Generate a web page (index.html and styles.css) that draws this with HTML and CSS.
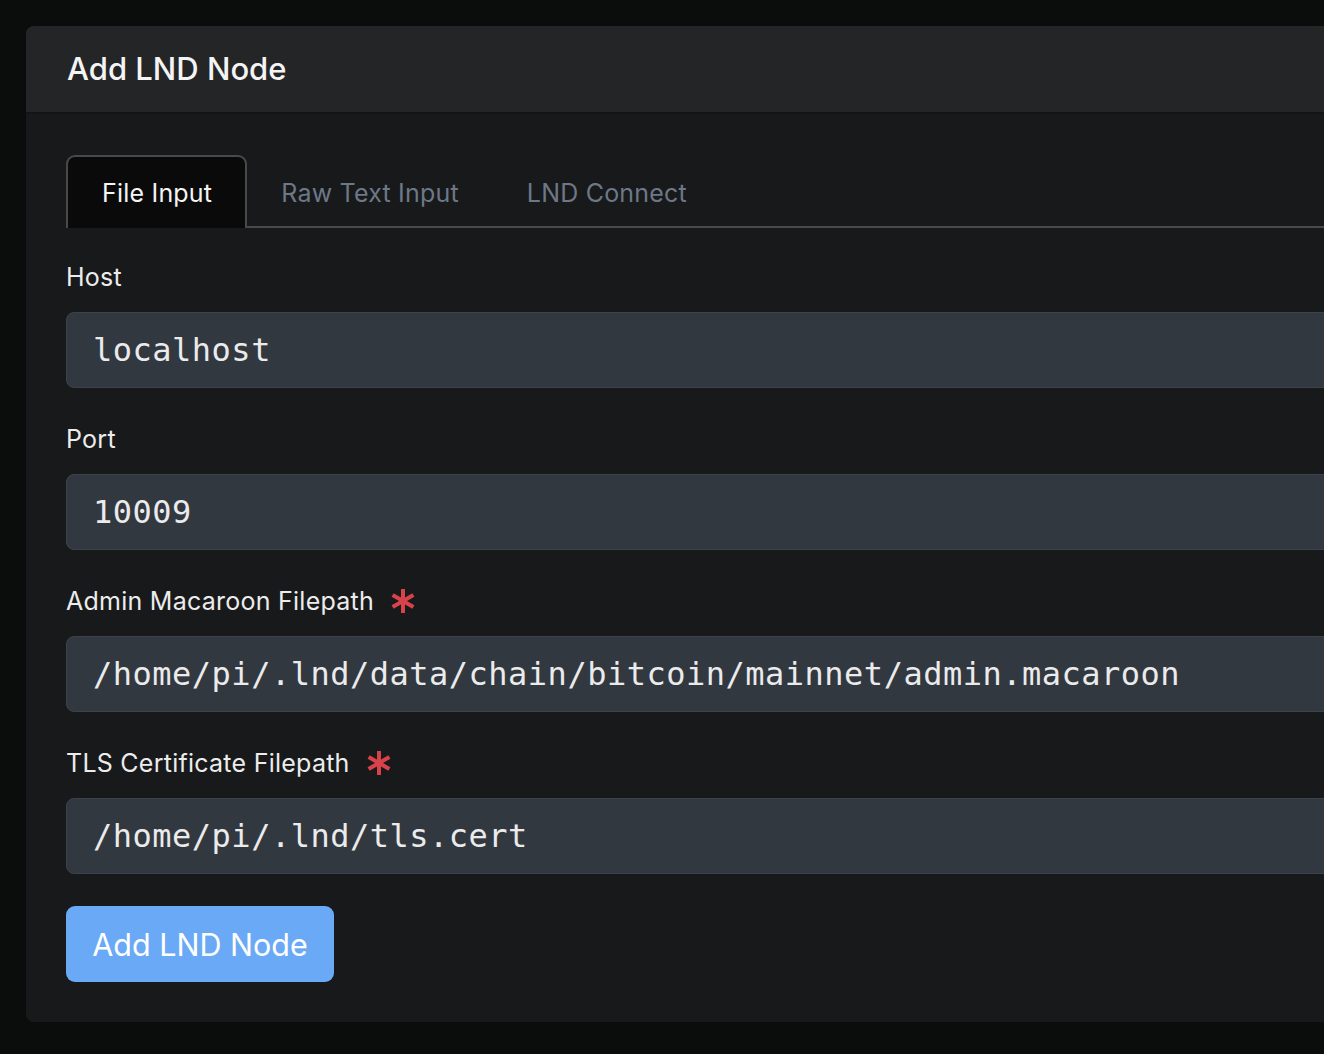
FILE: index.html
```html
<!DOCTYPE html>
<html lang="en">
<head>
<meta charset="utf-8">
<title>Add LND Node</title>
<link rel="stylesheet" href="styles.css">
</head>
<body>
<div class="page">
  <div class="card">
    <div class="card-header">
      <h1 class="card-title">Add LND Node</h1>
    </div>
    <div class="card-body">
      <div class="tabs">
        <div class="tab tab-active">File Input</div>
        <div class="tab">Raw Text Input</div>
        <div class="tab">LND Connect</div>
      </div>
      <form class="form">
        <div class="group">
          <label class="label">Host</label>
          <div class="input">localhost</div>
        </div>
        <div class="group">
          <label class="label">Port</label>
          <div class="input">10009</div>
        </div>
        <div class="group">
          <label class="label">Admin Macaroon Filepath
            <svg class="req" viewBox="0 0 26 26" width="26" height="26"><g stroke="#d8434b" stroke-width="4"><line x1="13" y1="1" x2="13" y2="25"/><line x1="2.6" y1="7" x2="23.4" y2="19"/><line x1="2.6" y1="19" x2="23.4" y2="7"/></g></svg>
          </label>
          <div class="input">/home/pi/.lnd/data/chain/bitcoin/mainnet/admin.macaroon</div>
        </div>
        <div class="group">
          <label class="label">TLS Certificate Filepath
            <svg class="req" viewBox="0 0 26 26" width="26" height="26"><g stroke="#d8434b" stroke-width="4"><line x1="13" y1="1" x2="13" y2="25"/><line x1="2.6" y1="7" x2="23.4" y2="19"/><line x1="2.6" y1="19" x2="23.4" y2="7"/></g></svg>
          </label>
          <div class="input">/home/pi/.lnd/tls.cert</div>
        </div>
        <div class="actions">
          <button type="button" class="btn">Add LND Node</button>
        </div>
      </form>
    </div>
  </div>
</div>
</body>
</html>
```
FILE: styles.css
```css
html, body {
  margin: 0;
  padding: 0;
  background: #0b0c0c;
  overflow: hidden;
}
body {
  font-family: Inter, "Noto Sans", "Liberation Sans", sans-serif;
  color: #ececec;
}
.page {
  padding: 26px 0 0 26px;
}
.card {
  width: 1400px;
  background: #18191b;
  border-radius: 8px;
  overflow: hidden;
}
.card-header {
  height: 86px;
  padding: 0 41px;
  background: #242527;
  border-bottom: 2px solid #131416;
  display: flex;
  align-items: center;
}
.card-title {
  margin: 0;
  font-size: 31px;
  font-weight: 500;
  color: #f4f4f4;
  transform: translateY(-1px);
}
.card-body {
  padding: 41px 40px 40px;
}
.tabs {
  display: flex;
  height: 73px;
  border-bottom: 2px solid #48494b;
  box-sizing: border-box;
}
.tab {
  display: flex;
  align-items: center;
  padding: 0 32px;
  font-size: 25px;
  letter-spacing: 0.2px;
  color: #6d7886;
  border: 2px solid transparent;
  border-bottom: none;
  margin-bottom: -2px;
  height: 73px;
  box-sizing: border-box;
}
.tab-active {
  background: #0a0a0a;
  color: #f4f4f4;
  border-color: #48494b;
  border-radius: 9px 9px 0 0;
  padding: 0 33px 0 34px;
}
.form {
  margin: 0;
}
.group {
  margin-top: 33px;
}
.group:first-child {
  margin-top: 31px;
}
.label {
  display: flex;
  align-items: center;
  height: 36px;
  font-size: 25px;
  letter-spacing: 0.25px;
  color: #ececec;
  margin-bottom: 17px;
}
.req {
  margin-left: 16px;
}
.input {
  height: 76px;
  box-sizing: border-box;
  background: #323840;
  border: 1px solid #3c434c;
  border-radius: 8px;
  padding-left: 26px;
  display: flex;
  align-items: center;
  font-family: "DejaVu Sans Mono", "Liberation Mono", monospace;
  font-size: 32px;
  letter-spacing: 0.5px;
  color: #ebebeb;
}
.actions {
  margin-top: 32px;
}
.btn {
  height: 76px;
  width: 268px;
  border: none;
  border-radius: 9px;
  background: #6aa9f5;
  color: #ffffff;
  font-family: Inter, "Noto Sans", "Liberation Sans", sans-serif;
  font-size: 30.5px;
  font-weight: 400;
  padding: 0;
}
```
